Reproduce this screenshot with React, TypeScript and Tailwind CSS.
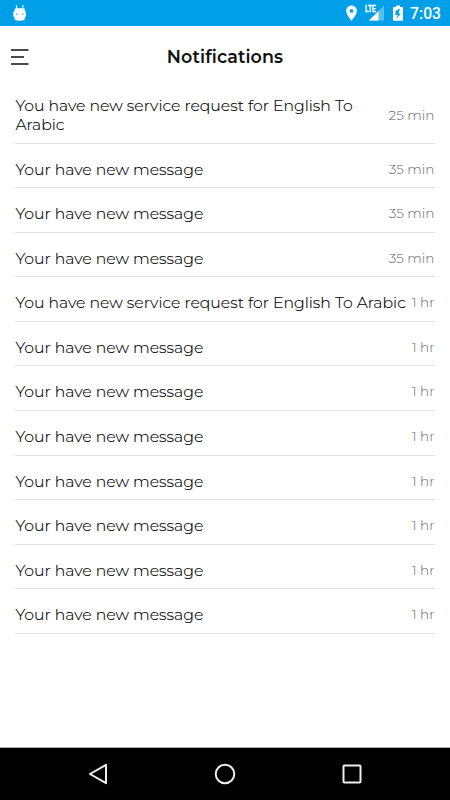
interface NotificationItem {
  id: number;
  message: string;
  time: string;
}

const REQUEST = 'You have new service request for English To Arabic';
const MESSAGE = 'Your have new message';

const notifications: NotificationItem[] = [
  { id: 1, message: REQUEST, time: '25 min' },
  { id: 2, message: MESSAGE, time: '35 min' },
  { id: 3, message: MESSAGE, time: '35 min' },
  { id: 4, message: MESSAGE, time: '35 min' },
  { id: 5, message: REQUEST, time: '1 hr' },
  { id: 6, message: MESSAGE, time: '1 hr' },
  { id: 7, message: MESSAGE, time: '1 hr' },
  { id: 8, message: MESSAGE, time: '1 hr' },
  { id: 9, message: MESSAGE, time: '1 hr' },
  { id: 10, message: MESSAGE, time: '1 hr' },
  { id: 11, message: MESSAGE, time: '1 hr' },
  { id: 12, message: MESSAGE, time: '1 hr' },
];

const StatusBar = () => (
  <div className="flex h-[26px] shrink-0 items-center justify-between bg-[#009fe8] pl-[12px] pr-[9px] text-white">
    <svg width="16" height="18" viewBox="12 3 16 18" className="mb-px">
      <path d="M17 8l-.7-4M22.500 8l.7-4" stroke="#fff" strokeWidth="1" />
      <path
        d="M14.500 8.500Q15 7 16.500 7h6.500q1.500 0 2 1.500v2l1 .8v4l-1 .9v1.800Q24.500 19.700 19.700 19.700T14.500 18v-1.800l-1.300-.9v-4l1.300-.8z"
        fill="#fff"
      />
      <path d="M16 8.300q3.700-1.300 7.500 0" stroke="#9adcf7" strokeWidth=".8" fill="none" />
      <path d="M16 12.500h1.500v1.500H16zM22 12.500h1.500v1.500H22z" fill="#5cbfec" />
    </svg>
    <div className="flex items-center">
      <svg width="60" height="22" viewBox="345 2 60 22">
        <path
          d="M351.500 5.500c-3 0-5.300 2.400-5.300 5.300 0 4 5.300 9.900 5.300 9.900s5.400-5.900 5.400-9.900c0-2.900-2.400-5.300-5.400-5.300zm0 3.500a1.900 1.900 0 1 1 0 3.800 1.900 1.900 0 0 1 0-3.800z"
          fill="#fff"
          fillRule="evenodd"
        />
        <path d="M384 5.500v15h-15z" fill="#fff" fillOpacity=".35" />
        <path d="M378.500 11v9.500H369z" fill="#fff" />
        <path d="M364 4h12.500v9H364z" fill="#009fe8" />
        <text
          x="365"
          y="12.300"
          fill="#fff"
          stroke="#fff"
          strokeWidth=".3"
          fontFamily="Roboto, sans-serif"
          fontSize="9.500"
          fontWeight="700"
          textLength="10.800"
          lengthAdjust="spacingAndGlyphs"
        >
          LTE
        </text>
        <path
          d="M396 5.500h4V7h2q1 0 1 1v11.700q0 1-1 1h-8q-1 0-1-1V8q0-1 1-1h2zM400 8.500l-4.500 2.500v4h2.300l-1.500 4 4.700-5.500h-2.500z"
          fill="#fff"
          fillRule="evenodd"
        />
      </svg>
      <span className="ml-[5.500px] mt-[2px] font-[Roboto,sans-serif] text-[15.700px] leading-5 font-medium">7:03</span>
    </div>
  </div>
);

const Header = () => (
  <header className="grid h-[53px] shrink-0 grid-cols-[40px_1fr_40px] items-center pt-[9px]">
    <button type="button" aria-label="Menu" className="flex pl-[11px]">
      <svg width="18" height="18" viewBox="0 0 18 18" fill="none" stroke="#111">
        <path d="M0 2h17.500M0 9h13M0 16h17.500" strokeWidth="1.600" />
      </svg>
    </button>
    <h1 className="text-center text-[17.500px] leading-5 font-semibold tracking-[0.100px] text-[#111]">
      Notifications
    </h1>
  </header>
);

interface NotificationRowProps {
  item: NotificationItem;
}

const NotificationRow = ({ item }: NotificationRowProps) => (
  <li className="flex items-center justify-between border-b border-[#e2e2e2] pt-[16px] pb-[8.580px]">
    <p className="pl-[0.400px] text-[15.700px] leading-[19px] font-light text-black [-webkit-text-stroke:0.15px_black]">
      {item.message}
    </p>
    <span className="shrink-0 pr-[0.500px] pl-[3px] text-[13.600px] leading-[19px] font-light text-[#666]">
      {item.time}
    </span>
  </li>
);

const NavigationBar = () => (
  <nav className="flex h-[53px] shrink-0 items-center justify-between border-t border-[#aaa] bg-black px-[88px]">
    <svg width="20" height="22" viewBox="0 0 20 22" fill="none" stroke="#eee" strokeWidth="2">
      <path d="M18 1.800v18.400L2 11z" strokeLinejoin="round" />
    </svg>
    <svg width="22" height="22" viewBox="0 0 22 22" fill="none" stroke="#eee" strokeWidth="2">
      <circle cx="11" cy="11" r="9.300" />
    </svg>
    <svg width="20" height="22" viewBox="0 0 20 22" fill="none" stroke="#eee" strokeWidth="2">
      <rect x="1.500" y="2.500" width="17" height="17" rx="1" />
    </svg>
  </nav>
);

const App = () => (
  <div className="flex h-[800px] w-[450px] flex-col bg-white font-[Montserrat,Inter,sans-serif]">
    <StatusBar />
    <Header />
    <ul className="flex-1 px-[15px] pt-[1px]">
      {notifications.map((item) => (
        <NotificationRow key={item.id} item={item} />
      ))}
    </ul>
    <NavigationBar />
  </div>
);

export default App;
